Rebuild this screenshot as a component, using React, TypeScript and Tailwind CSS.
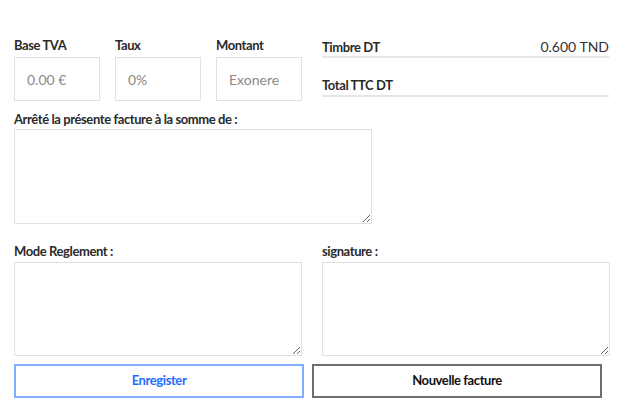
import React from 'react'

const labelCls = "block text-[13px] font-bold text-[#2a2a2a] tracking-[-0.4px] leading-[18px]"
const boxCls = "border border-[#e1e1e1] bg-white"

const Field: React.FC<{ label: string; placeholder: string }> = ({ label, placeholder }) => (
  <div className="w-[86px]">
    <label className={labelCls}>{label}</label>
    <input
      readOnly
      placeholder={placeholder}
      className={`${boxCls} mt-[3px] w-[86px] h-[44px] px-[12px] text-[14px] text-[#555] placeholder:text-[#8a8a8a] outline-none`}
    />
  </div>
)

const App: React.FC = () => {
  return (
    <div className="w-[642px] h-[415px] bg-white pl-[14px] pt-[36px]" style={{ fontFamily: 'Lato, "Open Sans", sans-serif' }}>
      <div className="flex">
        <div className="flex gap-[15px]">
          <Field label="Base TVA" placeholder="0.00 €" />
          <Field label="Taux" placeholder="0%" />
          <Field label="Montant" placeholder="Exonere" />
        </div>
        <div className="ml-[20px] w-[287px] pt-[2px]">
          <div className="flex justify-between items-end border-b-2 border-[#e6e6e6] h-[20px]">
            <span className={labelCls}>Timbre DT</span>
            <span className="text-[14px] text-[#333] leading-[18px]">0.600 TND</span>
          </div>
          <div className="flex items-end border-b-2 border-[#e6e6e6] h-[39px] pb-[1px]">
            <span className={labelCls}>Total TTC DT</span>
          </div>
        </div>
      </div>

      <div className="mt-[9px]">
        <label className={labelCls}>Arrêté la présente facture à la somme de :</label>
        <textarea className={`${boxCls} mt-[1px] block w-[358px] h-[95px] outline-none`} />
      </div>

      <div className="mt-[18px] flex gap-[20px]">
        <div>
          <label className={labelCls}>Mode Reglement :</label>
          <textarea className={`${boxCls} mt-[2px] block w-[288px] h-[94px] outline-none`} />
        </div>
        <div>
          <label className={labelCls}>signature :</label>
          <textarea className={`${boxCls} mt-[2px] block w-[288px] h-[94px] outline-none`} />
        </div>
      </div>

      <div className="mt-[8px] flex gap-[8px]">
        <button className="w-[290px] h-[34px] border-2 border-[#7fb0ff] text-[#1f6bff] text-[13px] font-bold tracking-[-0.4px]">
          Enregister
        </button>
        <button className="w-[290px] h-[34px] border-2 border-[#6f6f6f] text-[#111] text-[13px] font-bold tracking-[-0.4px]">
          Nouvelle facture
        </button>
      </div>
    </div>
  )
}

export default App
